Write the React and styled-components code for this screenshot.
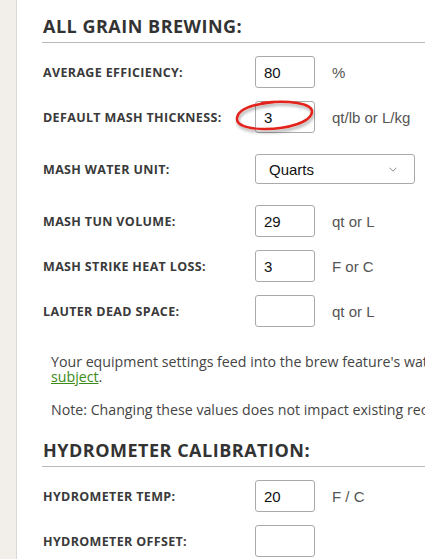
import React from "react";
import styled, { createGlobalStyle } from "styled-components";

const GlobalStyle = createGlobalStyle`
  html, body { margin: 0; padding: 0; background: #ffffff; overflow: hidden; }
  * { box-sizing: border-box; }
`;

const Page = styled.div`
  display: flex;
  min-height: 559px;
  width: 900px;
`;

const Gutter = styled.div`
  width: 17px;
  flex-shrink: 0;
  background: #f2efea;
  border-right: 1px solid #dcd9d4;
`;

const Main = styled.main`
  flex: 0 0 760px;
  padding: 14px 0 0 25px;
  font-family: "Open Sans", "Liberation Sans", sans-serif;
  color: #333;
`;

const Heading = styled.h2`
  margin: ${(p) => (p.$first ? "0" : "21px")} 0 13px 0;
  padding: 0 0 4px 1px;
  font-size: 18px;
  line-height: 24px;
  font-weight: 700;
  letter-spacing: 0.5px;
  color: #333;
  border-bottom: 1px solid #b9b9b9;
  text-transform: uppercase;
`;

const Rows = styled.div`
  display: flex;
  flex-direction: column;
  gap: 13px;
`;

const Row = styled.div`
  display: flex;
  align-items: center;
  min-height: 32px;
  padding-left: 1px;
  margin: ${(p) => (p.$spaced ? "7px 0 7px" : "0")};
`;

const Label = styled.label`
  width: 212px;
  flex-shrink: 0;
  font-size: 12.5px;
  font-weight: 700;
  letter-spacing: 0.35px;
  color: #3a3a3a;
  text-transform: uppercase;
`;

const FieldWrap = styled.div`
  position: relative;
  display: flex;
`;

const Input = styled.input`
  width: 60px;
  height: 32px;
  border: 1px solid #aaaaaa;
  border-radius: 3px;
  padding: 0 8px;
  font-family: "Liberation Sans", Arial, sans-serif;
  font-size: 15px;
  color: #111;
  background: #fff;
  outline: none;
`;

const Unit = styled.span`
  margin-left: 17px;
  font-family: "Liberation Sans", Arial, sans-serif;
  font-size: 15px;
  color: #555;
`;

const SelectBox = styled.div`
  width: 160px;
  height: 30px;
  border: 1px solid #aaaaaa;
  border-radius: 3px;
  display: flex;
  align-items: center;
  justify-content: space-between;
  padding: 0 17px 0 13px;
  font-family: "Liberation Sans", Arial, sans-serif;
  font-size: 15px;
  color: #111;
`;

const Annotation = styled.svg`
  position: absolute;
  left: -22px;
  top: -2px;
  width: 84px;
  height: 34px;
  overflow: visible;
  pointer-events: none;
`;

const Text = styled.p`
  margin: ${(p) => p.$m};
  padding-left: 9px;
  font-size: 14.2px;
  line-height: 15px;
  color: #444;
  white-space: nowrap;
`;

const Link = styled.a`
  color: #3d8b1a;
  text-decoration: underline;
`;

const Chevron = () => (
  <svg width="8" height="5" viewBox="0 0 8 5" fill="none">
    <path d="M0.5 0.7 L4 4.2 L7.5 0.7" stroke="#8a8a8a" strokeWidth="1" />
  </svg>
);

const Field = ({ value, circled }) => (
  <FieldWrap>
    <Input defaultValue={value} />
    {circled && (
      <Annotation viewBox="0 0 84 34">
        <defs>
          <filter id="sh" x="-20%" y="-30%" width="140%" height="170%">
            <feDropShadow dx="1" dy="2.5" stdDeviation="1.6" floodColor="#000" floodOpacity="0.35" />
          </filter>
        </defs>
        <path
          d="M29 4 C55 1 80 4 79 13 C78 23 55 30 32 30 C14 30 3 26 4 19 C5 11 18 5 42 3"
          stroke="#e3231c"
          strokeWidth="2.4"
          fill="none"
          strokeLinecap="round"
          filter="url(#sh)"
        />
      </Annotation>
    )}
  </FieldWrap>
);

export default function App() {
  return (
    <>
      <GlobalStyle />
      <Page>
        <Gutter />
        <Main>
          <Heading $first>All Grain Brewing:</Heading>
          <Rows>
            <Row>
              <Label>Average Efficiency:</Label>
              <Field value="80" />
              <Unit>%</Unit>
            </Row>
            <Row>
              <Label>Default Mash Thickness:</Label>
              <Field value="3" circled />
              <Unit>qt/lb or L/kg</Unit>
            </Row>
            <Row $spaced>
              <Label>Mash Water Unit:</Label>
              <SelectBox>
                <span>Quarts</span>
                <Chevron />
              </SelectBox>
            </Row>
            <Row>
              <Label>Mash Tun Volume:</Label>
              <Field value="29" />
              <Unit>qt or L</Unit>
            </Row>
            <Row>
              <Label>Mash Strike Heat Loss:</Label>
              <Field value="3" />
              <Unit>F or C</Unit>
            </Row>
            <Row>
              <Label>Lauter Dead Space:</Label>
              <Field value="" />
              <Unit>qt or L</Unit>
            </Row>
          </Rows>
          <Text $m="27px 0 0 0">
            Your equipment settings feed into the brew feature's water calculations. Read more about this
            <br />
            <Link href="#">subject</Link>.
          </Text>
          <Text $m="18px 0 0 0">
            Note: Changing these values does not impact existing recipes or brew sessions.
          </Text>
          <Heading>Hydrometer Calibration:</Heading>
          <Rows>
            <Row>
              <Label>Hydrometer Temp:</Label>
              <Field value="20" />
              <Unit>F / C</Unit>
            </Row>
            <Row>
              <Label>Hydrometer Offset:</Label>
              <Field value="" />
            </Row>
          </Rows>
        </Main>
      </Page>
    </>
  );
}
